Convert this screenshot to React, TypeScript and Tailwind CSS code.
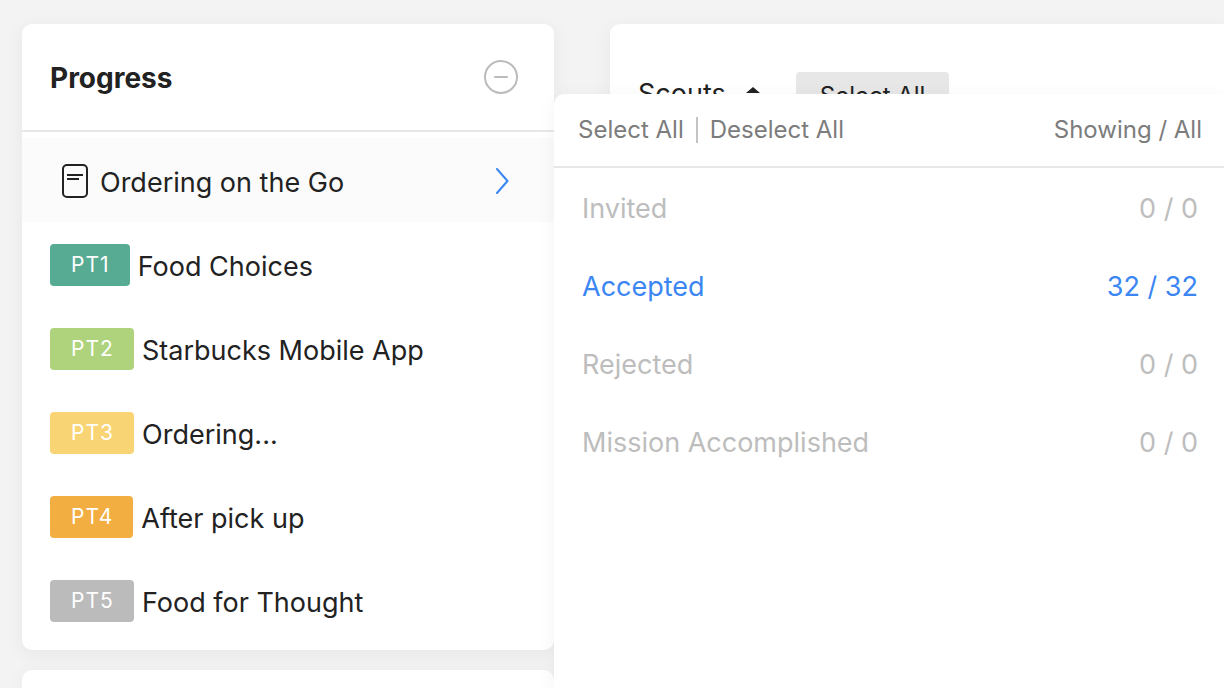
import { useState } from 'react'

type Part = {
  code: string
  title: string
  badge: string
}

type Status = {
  label: string
  showing: number
  all: number
}

const PARTS: Part[] = [
  { code: 'PT1', title: 'Food Choices', badge: 'bg-[#58ab93]' },
  { code: 'PT2', title: 'Starbucks Mobile App', badge: 'bg-[#afd37c]' },
  { code: 'PT3', title: 'Ordering...', badge: 'bg-[#f9d475]' },
  { code: 'PT4', title: 'After pick up', badge: 'bg-[#f2ae40]' },
  { code: 'PT5', title: 'Food for Thought', badge: 'bg-[#bbbbbb]' },
]

const STATUSES: Status[] = [
  { label: 'Invited', showing: 0, all: 0 },
  { label: 'Accepted', showing: 32, all: 32 },
  { label: 'Rejected', showing: 0, all: 0 },
  { label: 'Mission Accomplished', showing: 0, all: 0 },
]

function MinusCircle() {
  return (
    <svg width="34" height="34" viewBox="0 0 34 34" fill="none" stroke="#bbbbbb" strokeWidth="2">
      <circle cx="17" cy="17" r="16" />
      <path d="M11 17h12" strokeLinecap="round" />
    </svg>
  )
}

function NoteIcon() {
  return (
    <svg width="26" height="34" viewBox="0 0 26 34" fill="none" stroke="#222222" strokeWidth="2">
      <rect x="1" y="1" width="24" height="32" rx="4" />
      <path d="M5 11h16M5 15h12" />
    </svg>
  )
}

function Chevron() {
  return (
    <svg width="14" height="26" viewBox="0 0 14 26" fill="none" stroke="#3b86f3" strokeWidth="2">
      <path d="M1 1l10.500 12L1 25" strokeLinecap="round" strokeLinejoin="round" />
    </svg>
  )
}

function SortIcon() {
  return (
    <svg width="14" height="14" viewBox="0 0 14 14" fill="#222222">
      <path d="M7 0l7 6H0zM7 14l7-6H0z" />
    </svg>
  )
}

function ProgressCard() {
  return (
    <section className="rounded-[10px] bg-white shadow-[0_4px_20px_rgba(0,0,0,0.05)]">
      <header className="flex h-[108px] items-center justify-between border-b-2 border-[#e7e7e7] pr-9 pl-7">
        <h2 className="pt-0.5 text-[28px] leading-9 font-bold">Progress</h2>
        <button type="button" aria-label="Collapse">
          <MinusCircle />
        </button>
      </header>
      <div className="pt-1.5 pb-2">
        <button type="button" className="flex h-21 w-full items-center bg-[#fbfbfb] pt-0.5 pr-11 pl-10 text-left">
          <NoteIcon />
          <span className="ml-3 flex-1 pt-1 text-[27px] leading-9">Ordering on the Go</span>
          <Chevron />
        </button>
        <ul>
          {PARTS.map(part => (
            <li key={part.code} className="flex h-21 items-center gap-2 px-7 pt-0.5">
              <span className={`rounded py-1.5 pr-5 pl-[21px] text-[21px] leading-[30px] tracking-wider text-white ${part.badge}`}>
                {part.code}
              </span>
              <span className="pt-1 text-[27px] leading-9">{part.title}</span>
            </li>
          ))}
        </ul>
      </div>
    </section>
  )
}

function StatusMenu() {
  const [selected, setSelected] = useState('Accepted')

  return (
    <div className="absolute top-[94px] right-0 bottom-0 -left-14 rounded-tl-[10px] bg-white shadow-[0_4px_20px_rgba(0,0,0,0.05)]">
      <div className="flex h-[74px] items-center justify-between border-b-2 border-[#e7e7e7] pr-[22px] pl-6 text-2xl text-[#7c7c7c]">
        <div className="flex items-center gap-3">
          <button type="button">Select All</button>
          <span className="h-[26px] w-0.5 bg-[#c4c4c4]" />
          <button type="button">Deselect All</button>
        </div>
        <span>Showing / All</span>
      </div>
      <ul>
        {STATUSES.map(status => (
          <li key={status.label}>
            <button
              type="button"
              onClick={() => setSelected(status.label)}
              className={`flex h-[78px] w-full items-center justify-between pt-1 pr-[26px] pl-7 text-[27px] leading-9 ${
                selected === status.label ? 'text-[#3b86f3]' : 'text-[#bdbdbd]'
              }`}
            >
              <span>{status.label}</span>
              <span>{status.showing} / {status.all}</span>
            </button>
          </li>
        ))}
      </ul>
    </div>
  )
}

export default function App() {
  return (
    <div className="flex min-h-screen gap-14 overflow-hidden bg-[#f3f3f3] pl-[22px] font-['Inter',sans-serif] text-[#222222]">
      <div className="flex w-[532px] shrink-0 flex-col gap-5 pt-6">
        <ProgressCard />
        <div className="flex-1 rounded-t-[10px] bg-white shadow-[0_4px_20px_rgba(0,0,0,0.05)]" />
      </div>
      <main className="relative flex flex-1 flex-col pt-6">
        <section className="flex-1 rounded-tl-[10px] bg-white shadow-[0_4px_20px_rgba(0,0,0,0.05)]">
          <div className="flex items-start pt-12 pl-7">
            <button type="button" className="flex items-center gap-5 pt-1 text-[27px] leading-9">
              Scouts
              <SortIcon />
            </button>
            <button type="button" className="ml-9 rounded bg-[#e7e7e7] px-6 py-1.5 text-2xl leading-9">
              Select All
            </button>
          </div>
        </section>
        <StatusMenu />
      </main>
    </div>
  )
}
